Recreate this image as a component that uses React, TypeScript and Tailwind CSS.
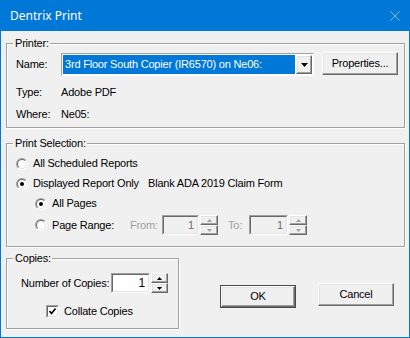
import type { ReactNode } from 'react'

const raised =
  'border border-t-white border-l-white border-b-[#696969] border-r-[#696969] shadow-[inset_-1px_-1px_0_#a0a0a0,inset_1px_1px_0_#e3e3e3] bg-[#f0f0f0]'

function Group({ label, className, children }: { label: string; className: string; children: ReactNode }) {
  return (
    <div
      className={`relative border border-[#a0a0a0] shadow-[inset_1px_1px_0_#fff,1px_1px_0_#fff] flex flex-col ${className}`}
    >
      <span className="absolute left-[6px] top-[-7px] h-[13px] leading-[13px] pl-[2px] pr-[1px] bg-[#f0f0f0]">
        {label}
      </span>
      {children}
    </div>
  )
}

function Sunken({ className, children }: { className: string; children?: ReactNode }) {
  return (
    <div className={`border border-t-[#a0a0a0] border-l-[#a0a0a0] border-b-white border-r-white ${className}`}>
      <div className="w-full h-full border border-t-[#696969] border-l-[#696969] border-b-[#e3e3e3] border-r-[#e3e3e3] flex items-center justify-end pr-[3px]">
        {children}
      </div>
    </div>
  )
}

function Arrow({ up, color }: { up: boolean; color: string }) {
  return (
    <svg width="5" height="3" viewBox="0 0 5 3">
      <polygon points={up ? '2.5,0 5,3 0,3' : '0,0 5,0 2.5,3'} fill={color} />
    </svg>
  )
}

function Spinner({ disabled, className }: { disabled?: boolean; className: string }) {
  const c = disabled ? '#a0a0a0' : '#000'
  return (
    <div className={`flex flex-col ${className}`}>
      <div className={`flex-1 flex items-center justify-center ${raised}`}>
        <Arrow up color={c} />
      </div>
      <div className={`flex-1 flex items-center justify-center ${raised}`}>
        <Arrow up={false} color={c} />
      </div>
    </div>
  )
}

function Radio({ checked }: { checked?: boolean }) {
  return (
    <div className="w-[12px] h-[12px] rounded-full border border-t-[#a0a0a0] border-l-[#a0a0a0] border-b-white border-r-white shrink-0">
      <div className="w-full h-full rounded-full border border-t-[#696969] border-l-[#696969] border-b-[#e3e3e3] border-r-[#e3e3e3] bg-white flex items-center justify-center">
        {checked && <div className="w-[4px] h-[4px] rounded-full bg-black" />}
      </div>
    </div>
  )
}

export default function App() {
  return (
    <div className="w-[410px] h-[338px] flex flex-col bg-[#f0f0f0] border border-t-0 border-[#0078d7] font-['Liberation_Sans',Arial,sans-serif] text-[11px] tracking-[-0.2px] text-black overflow-hidden">
      <div className="h-[31px] shrink-0 bg-[#0078d7] flex items-center justify-between pl-[9px] pr-[9px]">
        <span className="font-['Noto_Sans',sans-serif] text-[12px] tracking-normal text-white">Dentrix Print</span>
        <svg width="10" height="10" viewBox="0 0 10 10">
          <path d="M0.5 0.5 L9.5 9.5 M9.5 0.5 L0.5 9.5" stroke="#86bdea" strokeWidth="1" />
        </svg>
      </div>

      <div className="pl-[5px] flex flex-col">
        <Group label="Printer:" className="mt-[12px] w-[399px] h-[85px]">
          <div className="mt-[9px] pl-[9px] flex items-start">
            <span className="w-[45px] h-[23px] flex items-center">Name:</span>
            <div className="w-[253px] h-[23px] border border-t-[#a0a0a0] border-l-[#a0a0a0] border-b-white border-r-white bg-white p-[1px] flex">
              <div className="flex-1 bg-[#0078d7] text-white flex items-center pl-[2px] whitespace-nowrap overflow-hidden">
                3rd Floor South Copier (IR6570) on Ne06:
              </div>
              <div className={`ml-[1px] w-[16px] flex items-center justify-center ${raised}`}>
                <svg width="7" height="4" viewBox="0 0 7 4">
                  <polygon points="0,0 7,0 3.5,4" fill="#000" />
                </svg>
              </div>
            </div>
            <button className={`ml-[8px] -mt-[1px] w-[76px] h-[23px] flex items-center justify-center ${raised}`}>
              Properties...
            </button>
          </div>
          <div className="mt-[10px] pl-[9px] h-[13px] flex items-center">
            <span className="w-[45px]">Type:</span>
            <span>Adobe PDF</span>
          </div>
          <div className="mt-[9px] pl-[9px] h-[13px] flex items-center">
            <span className="w-[45px]">Where:</span>
            <span>Ne05:</span>
          </div>
        </Group>

        <Group label="Print Selection:" className="mt-[15px] w-[399px] h-[104px]">
          <div className="mt-[13px] pl-[9px] h-[13px] flex items-center">
            <Radio />
            <span className="ml-[5px]">All Scheduled Reports</span>
          </div>
          <div className="mt-[7px] pl-[9px] h-[13px] flex items-center">
            <Radio checked />
            <span className="ml-[5px] w-[115px]">Displayed Report Only</span>
            <span>Blank ADA 2019 Claim Form</span>
          </div>
          <div className="mt-[7px] pl-[28px] h-[13px] flex items-center">
            <Radio checked />
            <span className="ml-[5px]">All Pages</span>
          </div>
          <div className="mt-[5px] pl-[28px] h-[20px] flex items-center">
            <Radio />
            <span className="ml-[5px] w-[78px]">Page Range:</span>
            <span className="w-[32px] text-[#a0a0a0]">From:</span>
            <Sunken className="w-[37px] h-[20px]">
              <span className="text-[#6d6d6d]">1</span>
            </Sunken>
            <Spinner disabled className="ml-[1px] w-[18px] h-[20px]" />
            <span className="ml-[10px] w-[21px] text-[#a0a0a0]">To:</span>
            <Sunken className="w-[39px] h-[20px]">
              <span className="text-[#6d6d6d]">1</span>
            </Sunken>
            <Spinner disabled className="ml-[1px] w-[18px] h-[20px]" />
          </div>
        </Group>

        <div className="mt-[11px] flex items-start">
          <Group label="Copies:" className="w-[173px] h-[71px]">
            <div className="mt-[14px] pl-[14px] h-[20px] flex items-center">
              <span className="w-[90px]">Number of Copies:</span>
              <Sunken className="w-[39px] h-[20px] bg-white">
                <span className="text-[12px]">1</span>
              </Sunken>
              <Spinner className="ml-[1px] w-[17px] h-[20px]" />
            </div>
            <div className="mt-[12px] pl-[39px] h-[13px] flex items-center">
              <div className="w-[13px] h-[13px] border border-t-[#a0a0a0] border-l-[#a0a0a0] border-b-white border-r-white">
                <div className="w-full h-full border border-t-[#696969] border-l-[#696969] border-b-[#e3e3e3] border-r-[#e3e3e3] bg-white flex items-center justify-center">
                  <svg width="7" height="7" viewBox="0 0 7 7">
                    <path d="M0.5 3 L2.5 5.5 L6.5 0.5" stroke="#000" strokeWidth="1.6" fill="none" />
                  </svg>
                </div>
              </div>
              <span className="ml-[5px]">Collate Copies</span>
            </div>
          </Group>
          <div className="ml-[41px] mt-[27px] w-[76px] h-[23px] border border-[#4a4a4a]">
            <button className={`w-full h-full flex items-center justify-center ${raised}`}>OK</button>
          </div>
          <button className={`ml-[22px] mt-[25px] w-[76px] h-[23px] flex items-center justify-center ${raised}`}>
            Cancel
          </button>
        </div>
      </div>
    </div>
  )
}
